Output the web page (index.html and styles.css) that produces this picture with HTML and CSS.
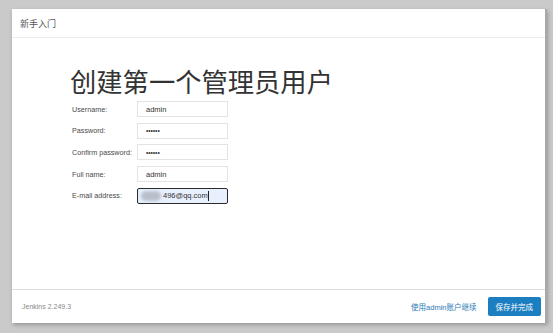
FILE: index.html
```html
<!DOCTYPE html>
<html>
<head>
<meta charset="utf-8">
<link rel="stylesheet" href="styles.css">
</head>
<body>
<div class="dialog">
  <div class="header">新手入门</div>
  <div class="content">
    <h1 class="title">创建第一个管理员用户</h1>
    <div class="form">
      <div class="row"><span class="label">Username:</span><span class="input">admin</span></div>
      <div class="row"><span class="label">Password:</span><span class="input dots">••••••</span></div>
      <div class="row"><span class="label">Confirm password:</span><span class="input dots">••••••</span></div>
      <div class="row"><span class="label">Full name:</span><span class="input">admin</span></div>
      <div class="row"><span class="label">E-mail address:</span><span class="input focus"><span class="blur"></span>496@qq.com<span class="caret"></span></span></div>
    </div>
  </div>
  <div class="footer">
    <span class="version">Jenkins 2.249.3</span>
    <span class="actions">
      <span class="link">使用admin账户继续</span>
      <span class="btn">保存并完成</span>
    </span>
  </div>
</div>
</body>
</html>
```
FILE: styles.css
```css
html, body { margin: 0; padding: 0; }
body {
  width: 553px;
  height: 333px;
  background: #cacaca;
  font-family: "Noto Sans", "Noto Sans CJK SC", sans-serif;
  box-sizing: border-box;
  padding: 9px 6px 0 12px;
}
.dialog {
  width: 535px;
  height: 314px;
  background: #fff;
  box-sizing: border-box;
  border-right: 2px solid #a8a8a8;
  box-shadow: 1px 2px 4px rgba(0,0,0,0.25);
  display: flex;
  flex-direction: column;
}
.header {
  height: 29px;
  box-sizing: border-box;
  border-bottom: 1px solid #ebebeb;
  padding-left: 8px;
  display: flex;
  align-items: center;
  font-size: 9px;
  color: #555;
  font-family: "Noto Sans CJK SC", sans-serif;
}
.content {
  flex: 1;
  padding: 27px 0 0 58px;
}
.title {
  margin: 0 0 4px 0;
  font-family: "Noto Sans CJK SC", sans-serif;
  font-weight: 400;
  font-size: 26.3px;
  line-height: 32px;
  color: #333;
}
.form { display: flex; flex-direction: column; gap: 5.7px; }
.row { display: flex; align-items: center; height: 16px; }
.label {
  width: 65px;
  padding-left: 2px;
  font-size: 7.2px;
  color: #4a4a4a;
  font-family: "Liberation Sans", sans-serif;
}
.input {
  width: 91px;
  height: 16px;
  box-sizing: border-box;
  border: 1px solid #e3e3e3;
  padding-left: 8px;
  display: flex;
  align-items: center;
  font-size: 7.5px;
  color: #333;
  font-family: "Liberation Sans", sans-serif;
}
.input.dots { font-size: 6.5px; color: #333; }
.input.focus {
  border: 1px solid #2b2b2b;
  border-radius: 2px;
  background: #e8f0fe;
  padding-left: 3px;
}
.blur {
  width: 20px;
  height: 10px;
  border-radius: 5px;
  background: #b9c0cc;
  filter: blur(1.5px);
  margin-right: 2px;
}
.caret { width: 1px; height: 10px; background: #222; margin-left: 0.5px; }
.footer {
  height: 34px;
  box-sizing: border-box;
  border-top: 1px solid #dcdcdc;
  display: flex;
  align-items: center;
  justify-content: space-between;
  padding: 0 4px 0 10px;
}
.version {
  font-size: 7px;
  color: #888;
  font-family: "Liberation Sans", sans-serif;
}
.actions { display: flex; align-items: center; gap: 11px; }
.link {
  font-size: 7.5px;
  color: #2a79b6;
  font-family: "Liberation Sans", "Noto Sans CJK SC", sans-serif;
}
.btn {
  background: #1b7ec1;
  color: #fff;
  font-size: 7.5px;
  font-family: "Noto Sans CJK SC", sans-serif;
  height: 19px;
  padding: 0 8px;
  display: flex;
  align-items: center;
  border-radius: 2px;
}
```
